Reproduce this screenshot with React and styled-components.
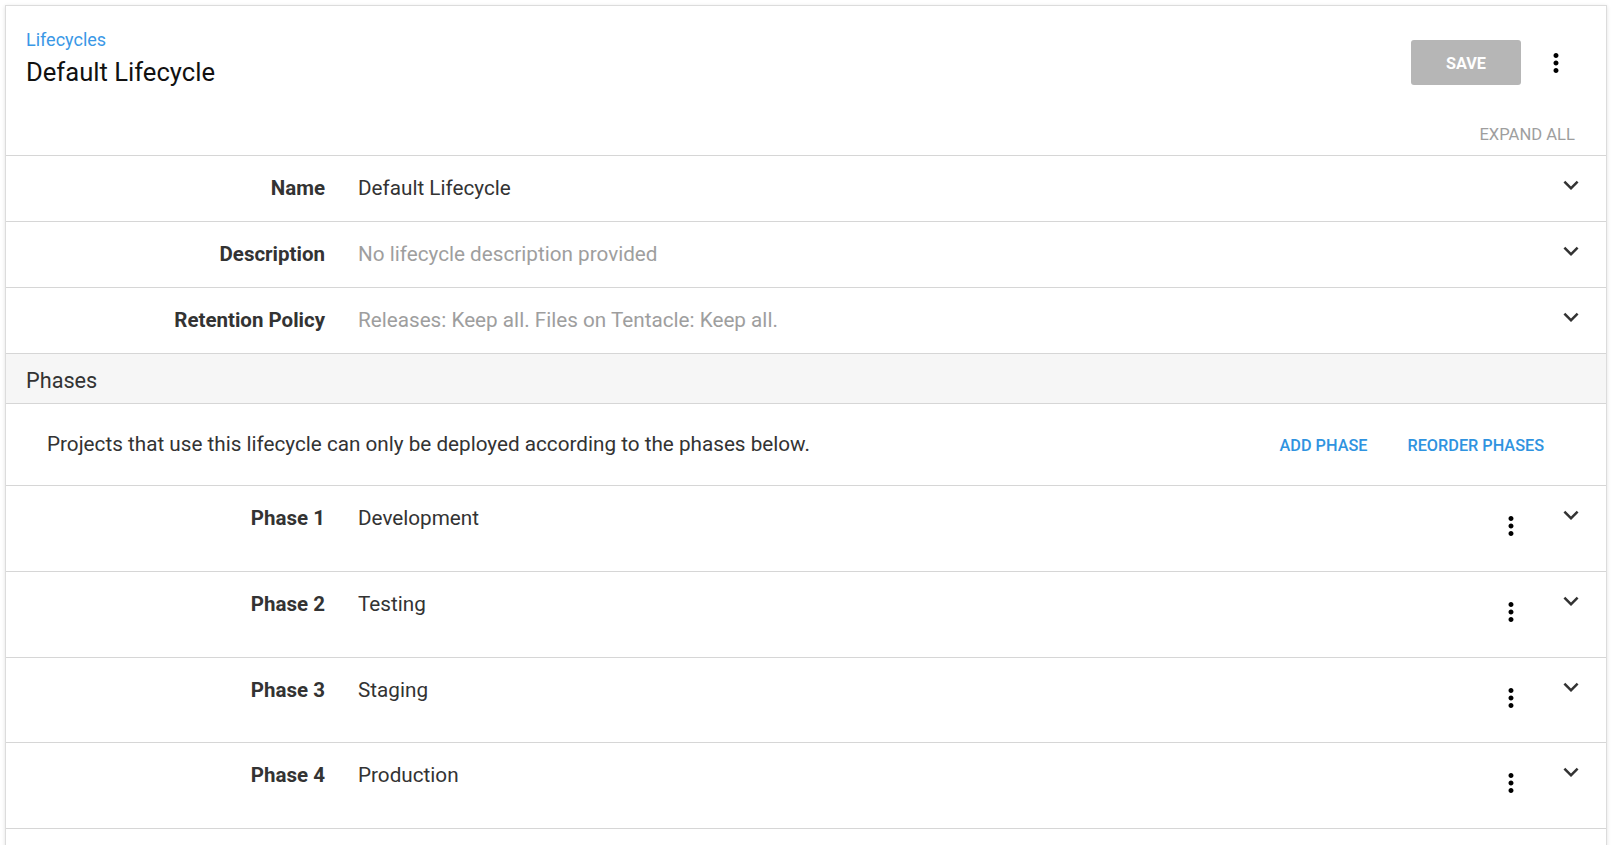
import React from "react";
import styled, { createGlobalStyle } from "styled-components";

const GlobalStyle = createGlobalStyle`
  html, body { margin: 0; padding: 0; background: #ffffff; }
  body { font-family: Roboto, "Noto Sans", "Liberation Sans", sans-serif; color: #333; }
  * { box-sizing: border-box; }
`;

const Page = styled.div`
  padding: 5px 6px 0 5px;
`;

const Card = styled.div`
  background: #fff;
  border: 1px solid #dcdcdc;
  box-shadow: 0 1px 4px rgba(0, 0, 0, 0.12);
  min-height: 880px;
`;

const Header = styled.div`
  padding: 20px 35px 8.5px 20px;
`;

const TopRow = styled.div`
  display: flex;
  justify-content: space-between;
  align-items: flex-start;
`;

const TitleBlock = styled.div`
  display: flex;
  flex-direction: column;
`;

const Breadcrumb = styled.a`
  font-size: 18px;
  line-height: 27px;
  color: #3a98e6;
  text-decoration: none;
  cursor: pointer;
`;

const Title = styled.h1`
  margin: 3px 0 0;
  font-size: 25.6px;
  line-height: 32px;
  font-weight: 400;
  color: #111;
`;

const Actions = styled.div`
  display: flex;
  align-items: center;
  gap: 20px;
  margin-top: 14px;
`;

const SaveButton = styled.button`
  width: 110px;
  height: 45px;
  border: none;
  border-radius: 3px;
  background: #b6b6b6;
  color: #fff;
  font-family: inherit;
  font-size: 16.25px;
  font-weight: 700;
  padding: 2px 0 0;
  text-transform: uppercase;
  cursor: default;
`;

const IconBox = styled.span`
  display: inline-flex;
  width: 30px;
  height: 30px;
  flex: 0 0 30px;
  margin-top: ${(p) => p.$top || 0}px;
  color: ${(p) => p.$color || "#333"};
  svg { width: 30px; height: 30px; display: block; fill: currentColor; }
`;

const ExpandRow = styled.div`
  display: flex;
  justify-content: flex-end;
  margin-top: 34.5px;
  margin-right: -4px;
`;

const TextButton = styled.button`
  border: none;
  background: none;
  padding: 0;
  font-family: inherit;
  font-size: ${(p) => (p.$accent ? 16.25 : 16.6)}px;
  line-height: 24px;
  font-weight: ${(p) => (p.$accent ? 500 : 400)};
  color: ${(p) => (p.$accent ? "#2f93e0" : "#9e9e9e")};
  text-transform: uppercase;
  cursor: pointer;
`;

const Row = styled.div`
  display: flex;
  align-items: flex-start;
  border-top: 1px solid #d6d6d6;
  height: ${(p) => p.$height}px;
  padding-right: 20px;
`;

const Label = styled.div`
  flex: 0 0 319px;
  text-align: right;
  padding-top: 17px;
  font-size: 20.5px;
  line-height: 30px;
  font-weight: 700;
  color: #333;
`;

const Value = styled.div`
  flex: 1;
  margin-left: 33px;
  padding-top: 17px;
  font-size: 20.7px;
  line-height: 30px;
  color: ${(p) => (p.$muted ? "#9e9e9e" : "#333")};
`;

const Tools = styled.div`
  display: flex;
  align-items: flex-start;
  gap: 30px;
`;

const SectionHeader = styled.div`
  display: flex;
  align-items: center;
  height: 50px;
  border-top: 1px solid #d6d6d6;
  background: #f6f6f6;
  padding: 3px 0 0 20px;
  font-size: 21.7px;
  color: #333;
`;

const InfoRow = styled.div`
  display: flex;
  align-items: center;
  justify-content: space-between;
  height: 82px;
  border-top: 1px solid #d6d6d6;
  padding: 0 42px 0 41px;
  font-size: 20.7px;
  color: #333;
`;

const InfoText = styled.span`
  margin-top: -1px;
`;

const LinkGroup = styled.div`
  display: flex;
  align-items: center;
  margin-top: 2px;
`;

const LinkButton = styled(TextButton)`
  padding: 0 20px;
`;

const EndLine = styled.div`
  border-top: 1px solid #d6d6d6;
`;

const MoreVert = () => (
  <svg viewBox="0 0 24 24" aria-hidden="true">
    <path d="M12 8c1.1 0 2-.9 2-2s-.9-2-2-2-2 .9-2 2 .9 2 2 2zm0 2c-1.1 0-2 .9-2 2s.9 2 2 2 2-.9 2-2-.9-2-2-2zm0 6c-1.1 0-2 .9-2 2s.9 2 2 2 2-.9 2-2-.9-2-2-2z" />
  </svg>
);

const ExpandMore = () => (
  <svg viewBox="0 0 24 24" aria-hidden="true">
    <path d="M16.59 8.59 12 13.17 7.41 8.59 6 10l6 6 6-6z" />
  </svg>
);

const fields = [
  { label: "Name", value: "Default Lifecycle" },
  { label: "Description", value: "No lifecycle description provided", muted: true },
  { label: "Retention Policy", value: "Releases: Keep all. Files on Tentacle: Keep all.", muted: true },
];

const phases = ["Development", "Testing", "Staging", "Production"];

export default function App() {
  return (
    <>
      <GlobalStyle />
      <Page>
        <Card>
          <Header>
            <TopRow>
              <TitleBlock>
                <Breadcrumb>Lifecycles</Breadcrumb>
                <Title>Default Lifecycle</Title>
              </TitleBlock>
              <Actions>
                <SaveButton>Save</SaveButton>
                <IconBox $color="#000">
                  <MoreVert />
                </IconBox>
              </Actions>
            </TopRow>
            <ExpandRow>
              <TextButton>Expand all</TextButton>
            </ExpandRow>
          </Header>

          {fields.map((f) => (
            <Row key={f.label} $height={66}>
              <Label>{f.label}</Label>
              <Value $muted={f.muted}>{f.value}</Value>
              <Tools>
                <IconBox $top={14}>
                  <ExpandMore />
                </IconBox>
              </Tools>
            </Row>
          ))}

          <SectionHeader>Phases</SectionHeader>
          <InfoRow>
            <InfoText>Projects that use this lifecycle can only be deployed according to the phases below.</InfoText>
            <LinkGroup>
              <LinkButton $accent>Add phase</LinkButton>
              <LinkButton $accent>Reorder phases</LinkButton>
            </LinkGroup>
          </InfoRow>

          {phases.map((p, i) => (
            <Row key={p} $height={85.75}>
              <Label>Phase {i + 1}</Label>
              <Value>{p}</Value>
              <Tools>
                <IconBox $top={25} $color="#000">
                  <MoreVert />
                </IconBox>
                <IconBox $top={14}>
                  <ExpandMore />
                </IconBox>
              </Tools>
            </Row>
          ))}
          <EndLine />
        </Card>
      </Page>
    </>
  );
}
